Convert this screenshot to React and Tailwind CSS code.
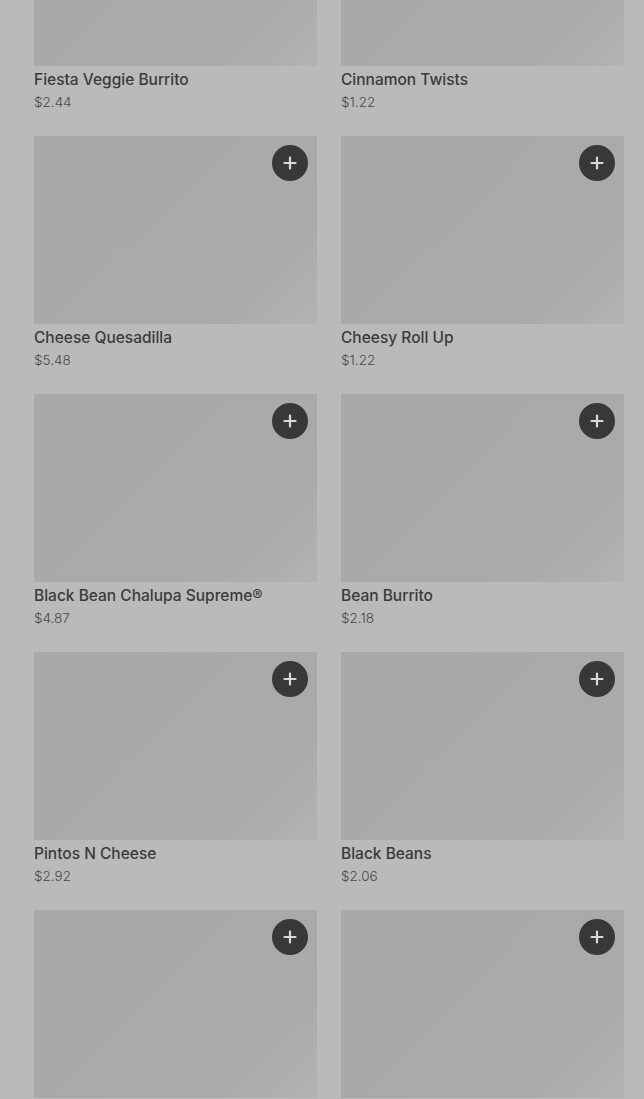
const items = [
  { name: "Fiesta Veggie Burrito", price: "$2.44" },
  { name: "Cinnamon Twists", price: "$1.22" },
  { name: "Cheese Quesadilla", price: "$5.48" },
  { name: "Cheesy Roll Up", price: "$1.22" },
  { name: "Black Bean Chalupa Supreme®", price: "$4.87" },
  { name: "Bean Burrito", price: "$2.18" },
  { name: "Pintos N Cheese", price: "$2.92" },
  { name: "Black Beans", price: "$2.06" },
  { name: null, price: null },
  { name: null, price: null },
]

function PlusButton() {
  return (
    <button className="absolute right-[9px] top-[9px] flex h-9 w-9 items-center justify-center rounded-full bg-[#383838]">
      <svg width="14" height="14" viewBox="0 0 14 14" fill="none">
        <path d="M7 1.5v11M1.5 7h11" stroke="#d9d9d9" strokeWidth="2.2" strokeLinecap="round" />
      </svg>
    </button>
  )
}

function Card({ item }) {
  return (
    <div className="pb-[24px]">
      <div className="relative h-[188px] bg-[linear-gradient(135deg,#a9a9a9_0%,#aaaaaa_78%,#b3b3b3_100%)]">
        <PlusButton />
      </div>
      {item.name && (
        <>
          <div className="mt-[2px] text-[15.5px] leading-6 font-medium text-[#3a3a3a]">{item.name}</div>
          <div className="text-[13.5px] leading-5 font-light text-[#474747]">{item.price}</div>
        </>
      )}
    </div>
  )
}

export default function App() {
  return (
    <main
      className="h-[1099px] overflow-hidden bg-[#bababa] pl-[34px] pr-[20px]"
      style={{ fontFamily: "Inter, 'Liberation Sans', sans-serif" }}
    >
      <div className="mt-[-122px] grid grid-cols-2 gap-x-6">
        {items.map((item, index) => (
          <Card key={index} item={item} />
        ))}
      </div>
    </main>
  )
}
